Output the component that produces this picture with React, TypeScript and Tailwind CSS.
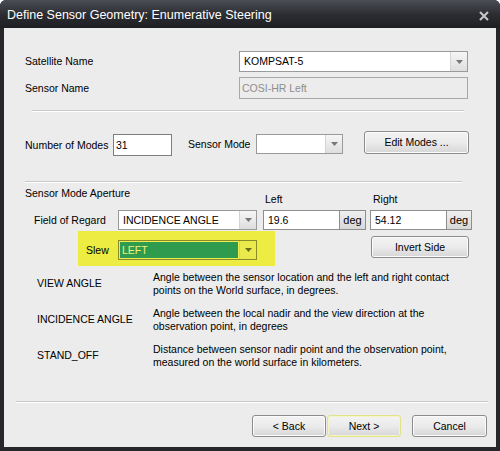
import React from "react";

const font = "font-['Liberation_Sans',Arial,sans-serif]";

function Arrow({ yellow }: { yellow?: boolean }) {
  return (
    <div
      className={[
        "w-[17px] h-full flex items-center justify-center border-l",
        yellow ? "bg-[#eaea4c] border-[#d8d84a]" : "bg-gradient-to-b from-[#f6f6f6] to-[#dedede] border-[#d4d4d4]",
      ].join(" ")}
    >
      <svg width="7" height="4" viewBox="0 0 7 4">
        <path d="M0 0h7L3.5 4z" fill={yellow ? "#6a6a20" : "#777"} />
      </svg>
    </div>
  );
}

function Combo({ w, value, yellow, selected }: { w: string; value?: string; yellow?: boolean; selected?: boolean }) {
  return (
    <div
      className={[
        "flex h-[20px] border",
        w,
        yellow ? "bg-[#eeee4e] border-[#8a8a28]" : "bg-white border-[#9a9a9a]",
      ].join(" ")}
    >
      <div className="flex-1 flex items-center px-[1px]">
        {selected ? (
          <div className="h-[16px] w-full bg-[#2e9b4e] text-[#eef27a] flex items-center px-[2px]">{value}</div>
        ) : (
          <span className="px-[3px] text-black">{value}</span>
        )}
      </div>
      <Arrow yellow={yellow} />
    </div>
  );
}

function Btn({ label, w, focus }: { label: string; w: string; focus?: boolean }) {
  return (
    <div
      className={[
        "h-[22px] flex items-center justify-center rounded-[3px] border text-black bg-gradient-to-b from-[#f3f3f3] via-[#ebebeb] to-[#d6d6d6]",
        w,
        focus ? "border-[#e2e28a] shadow-[inset_0_0_0_1px_#f4f4c8]" : "border-[#8c8c8c] shadow-[inset_0_0_0_1px_#fbfbfb]",
      ].join(" ")}
    >
      {label}
    </div>
  );
}

function DegInput({ value, w, dw }: { value: string; w: string; dw: string }) {
  return (
    <div className="flex h-[20px]">
      <div className={["h-full bg-white border border-[#8e8e8e] flex items-center px-[4px]", w].join(" ")}>{value}</div>
      <div
        className={[
          "h-full border border-[#8e8e8e] border-l-0 bg-gradient-to-b from-[#f0f0f0] to-[#d8d8d8] flex items-center justify-center text-[11px]",
          dw,
        ].join(" ")}
      >
        deg
      </div>
    </div>
  );
}

function Separator({ ml, w }: { ml: string; w: string }) {
  return <div className={["h-[2px] border-t border-[#c8c8c8] border-b border-b-white", ml, w].join(" ")} />;
}

const DESCRIPTIONS = [
  { name: "VIEW ANGLE", text: ["Angle between the sensor location and the left and right contact", "points on the World surface, in degrees."] },
  { name: "INCIDENCE ANGLE", text: ["Angle between the local nadir and the view direction at the", "observation point, in degrees"] },
  { name: "STAND_OFF", text: ["Distance between sensor nadir point and the observation point,", "measured on the world surface in kilometers."] },
];

export default function App() {
  return (
    <div className={["w-[500px] h-[451px] bg-[#25272b] flex flex-col rounded-t-[6px] overflow-hidden", font].join(" ")}>
      {/* title bar */}
      <div className="h-[28px] flex items-center justify-between pl-[7px] pr-[11px] pt-[3px] bg-gradient-to-b from-[#4b4e55] via-[#2c2e33] to-[#1d1f23]">
        <span className="text-white text-[12.5px] leading-none">Define Sensor Geometry: Enumerative Steering</span>
        <svg width="10" height="10" viewBox="0 0 10 10">
          <path d="M1 1l8 8M9 1l-8 8" stroke="#c4c4c4" strokeWidth="2.2" />
        </svg>
      </div>

      <div className="flex-1 mx-[4px] mb-[4px] bg-[#ececec] flex flex-col text-[10.5px] text-black leading-[13px]">
        {/* names */}
        <div className="flex items-center h-[21px] mt-[23px]">
          <span className="w-[235px] pl-[21px]">Satellite Name</span>
          <Combo w="w-[229px] h-[21px]" value="KOMPSAT-5" />
        </div>
        <div className="flex items-center h-[22px] mt-[5px]">
          <span className="w-[235px] pl-[21px]">Sensor Name</span>
          <div className="w-[229px] h-[22px] border border-[#a8a8a8] bg-[#ececec] text-[#8e8e8e] flex items-center px-[2px]">COSI-HR Left</div>
        </div>

        <div className="mt-[11px]">
          <Separator ml="ml-[28px]" w="w-[432px]" />
        </div>

        {/* modes */}
        <div className="flex items-start h-[25px] mt-[19px]">
          <span className="ml-[21px] mt-[8px] w-[88px]">Number of Modes</span>
          <div className="mt-[3px] w-[59px] h-[22px] bg-white border border-[#7e7e7e] flex items-center px-[2px]">31</div>
          <span className="ml-[16px] mt-[7px] w-[68px]">Sensor Mode</span>
          <div className="mt-[3px]">
            <Combo w="w-[87px]" />
          </div>
          <div className="ml-[21px]">
            <Btn label="Edit Modes ..." w="w-[105px] h-[23px]" />
          </div>
        </div>

        <div className="mt-[25px]">
          <Separator ml="ml-[21px]" w="w-[437px]" />
        </div>

        {/* aperture */}
        <div className="flex items-start h-[27px]">
          <span className="ml-[21px] mt-[4px] w-[240px]">Sensor Mode Aperture</span>
          <span className="mt-[10px] w-[108px]">Left</span>
          <span className="mt-[10px]">Right</span>
        </div>
        <div className="flex items-center h-[20px]">
          <span className="ml-[30px] w-[84px]">Field of Regard</span>
          <Combo w="w-[139px]" value="INCIDENCE ANGLE" />
          <div className="ml-[6px]">
            <DegInput value="19.6" w="w-[77px]" dw="w-[26px]" />
          </div>
          <div className="ml-[4px]">
            <DegInput value="54.12" w="w-[77px]" dw="w-[25px]" />
          </div>
        </div>

        <div className="flex items-start h-[36px] mt-[1px]">
          <div className="ml-[74px] w-[197px] h-[35px] bg-[#ecec42] flex items-start pt-[9px]">
            <span className="ml-[8px] mt-[4px] w-[32px]">Slew</span>
            <Combo w="w-[139px]" value="LEFT" yellow selected />
          </div>
          <div className="ml-[96px] mt-[5px]">
            <Btn label="Invert Side" w="w-[98px]" />
          </div>
        </div>

        {/* descriptions */}
        <div className="flex flex-col gap-[10px] mt-[4px]">
          {DESCRIPTIONS.map((d) => (
            <div key={d.name} className="flex items-center">
              <span className="ml-[33px] w-[116px] -mt-[2px]">{d.name}</span>
              <div className="flex flex-col">
                {d.text.map((t) => (
                  <span key={t}>{t}</span>
                ))}
              </div>
            </div>
          ))}
        </div>

        {/* footer */}
        <div className="mt-auto">
          <Separator ml="ml-[12px]" w="w-[472px]" />
        </div>
        <div className="flex h-[22px] mt-[12px] mb-[10px]">
          <div className="ml-[248px]">
            <Btn label="< Back" w="w-[74px]" />
          </div>
          <div className="ml-[1px]">
            <Btn label="Next >" w="w-[74px]" focus />
          </div>
          <div className="ml-[11px]">
            <Btn label="Cancel" w="w-[75px]" />
          </div>
        </div>
      </div>
    </div>
  );
}
